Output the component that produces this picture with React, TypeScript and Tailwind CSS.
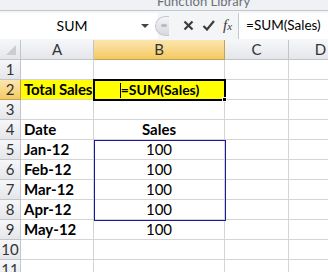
import React from "react";

const font = { fontFamily: "Lato, 'Open Sans', sans-serif" };

const rows: { a: string; b: string; aBold?: boolean; bBold?: boolean; yellow?: boolean }[] = [
  { a: "", b: "" },
  { a: "Total Sales", b: "=SUM(Sales)", aBold: true, bBold: true, yellow: true },
  { a: "", b: "" },
  { a: "Date", b: "Sales", aBold: true, bBold: true },
  { a: "Jan-12", b: "100", aBold: true },
  { a: "Feb-12", b: "100", aBold: true },
  { a: "Mar-12", b: "100", aBold: true },
  { a: "Apr-12", b: "100", aBold: true },
  { a: "May-12", b: "100", aBold: true },
  { a: "", b: "" },
  { a: "", b: "" },
];

export default function App() {
  return (
    <div className="w-[328px] h-[272px] overflow-hidden bg-white relative" style={font}>
      {/* ribbon strip */}
      <div className="h-[11px] bg-[#eff1f4] border-b border-[#c4c8ce] overflow-hidden flex">
        <span className="ml-[157px] text-[13px] leading-[13px] text-[#6b6f77] mt-[-5px] whitespace-nowrap">Function Library</span>
      </div>
      {/* formula bar */}
      <div className="h-[29px] bg-[#f4f5f7] flex items-center">
        <div className="w-[158px] shrink-0 h-[26px] bg-white flex items-center">
          <div className="flex-1 text-center text-[14px] text-black pl-[4px]">SUM</div>
          <svg width="10" height="6" viewBox="0 0 10 6" className="mr-[8px]">
            <path d="M1 1 L9 1 L5 5 Z" fill="#444" />
          </svg>
        </div>
        <div className="w-[14px] shrink-0 h-[20px] rounded-l-full bg-gradient-to-b from-[#f3f4f6] to-[#d6d9de] border border-[#c5c9cf] border-r-0 -ml-[3px] flex items-center justify-center">
          <div className="w-[6px] h-[3px] rounded-full bg-[#b7bcc3] ml-[3px]" />
        </div>
        <div className="flex items-center shrink-0 ml-[14px]">
          <svg width="11" height="11" viewBox="0 0 11 11" className="shrink-0">
            <path d="M1.5 1.5 L9.5 9.5 M9.5 1.5 L1.5 9.5" stroke="#3c3c3c" strokeWidth="2.2" />
          </svg>
          <svg width="13" height="11" viewBox="0 0 13 11" className="shrink-0 ml-[8px]">
            <path d="M1.5 6 L5 9.5 L12 1" stroke="#3c3c3c" strokeWidth="2.2" fill="none" />
          </svg>
          <span className="ml-[8px] text-[15px] italic text-[#3a3a3a] leading-none" style={{ fontFamily: "'Liberation Serif', serif" }}>
            f<span className="text-[11px]">x</span>
          </span>
        </div>
        <div className="ml-[6px] flex-1 min-w-0 overflow-hidden h-[26px] bg-white border-l border-[#c5c9cf] flex items-center pl-[7px] text-[13.5px] text-black whitespace-nowrap">
          =SUM(Sales)
        </div>
      </div>
      {/* grid */}
      <div className="flex flex-col">
        {/* header row */}
        <div className="flex h-[20px]">
          <div className="w-[21px] shrink-0 bg-gradient-to-b from-[#f6f7f9] to-[#e4e6ea] border-r border-b border-[#c2c6cc] relative">
            <svg width="12" height="12" viewBox="0 0 12 12" className="absolute right-[3px] bottom-[3px]">
              <path d="M11 1 L11 11 L1 11 Z" fill="#c9ccd1" />
            </svg>
          </div>
          <div className="w-[73px] shrink-0 bg-gradient-to-b from-[#f6f7f9] to-[#e4e6ea] border-r border-b border-[#c2c6cc] flex items-center justify-center text-[15px] text-[#333]">A</div>
          <div className="w-[131px] shrink-0 bg-gradient-to-b from-[#fbe6b0] to-[#f6c95f] border-r border-b border-[#c2a25a] flex items-center justify-center text-[15px] text-[#333]">B</div>
          <div className="w-[64px] shrink-0 bg-gradient-to-b from-[#f6f7f9] to-[#e4e6ea] border-r border-b border-[#c2c6cc] flex items-center justify-center text-[15px] text-[#333]">C</div>
          <div className="w-[64px] shrink-0 bg-gradient-to-b from-[#f6f7f9] to-[#e4e6ea] border-r border-b border-[#c2c6cc] flex items-center justify-center text-[15px] text-[#333]">D</div>
        </div>
        {rows.map((r, i) => {
          const n = i + 1;
          const active = n === 2;
          return (
            <div key={n} className="flex h-[20px]">
              <div
                className={
                  active
                    ? "w-[21px] shrink-0 bg-gradient-to-b from-[#fbe6b0] to-[#f6c95f] border-r border-b border-[#c2a25a] flex items-center justify-center text-[15px] text-[#333]"
                    : "w-[21px] shrink-0 bg-gradient-to-b from-[#f6f7f9] to-[#e4e6ea] border-r border-b border-[#c2c6cc] flex items-center justify-center text-[15px] text-[#333]"
                }
              >
                {n}
              </div>
              <div
                className={
                  (r.yellow ? "bg-[#ffff00] tracking-[-0.2px] " : "") +
                  "w-[73px] shrink-0 border-r border-b border-[#d4d4d4] flex items-center pl-[3px] text-[15px] text-black whitespace-nowrap overflow-hidden" +
                  (r.aBold ? " font-bold" : "")
                }
              >
                {r.a}
              </div>
              <div
                className={
                  (r.yellow ? "bg-[#ffff00] text-[14px] pl-[2px] " : "text-[15px] ") +
                  "w-[131px] shrink-0 border-r border-b border-[#d4d4d4] flex items-center justify-center text-black whitespace-nowrap relative" +
                  (r.bBold ? " font-bold" : "")
                }
              >
                {r.b}
              </div>
              <div className="w-[64px] shrink-0 border-r border-b border-[#d4d4d4]" />
              <div className="w-[64px] shrink-0 border-r border-b border-[#d4d4d4]" />
            </div>
          );
        })}
      </div>
      {/* active cell border B2 */}
      <div className="absolute left-[93px] top-[79px] w-[133px] h-[22px] border-2 border-black pointer-events-none" />
      <div className="absolute left-[222px] top-[97px] w-[5px] h-[5px] bg-black border border-white pointer-events-none" />
      {/* text cursor */}
      <div className="absolute left-[120px] top-[83px] w-[1px] h-[15px] bg-black" />
      {/* named range outline */}
      <div className="absolute left-[94px] top-[140px] w-[132px] h-[81px] border border-[#1a1a9c] pointer-events-none" />
    </div>
  );
}
